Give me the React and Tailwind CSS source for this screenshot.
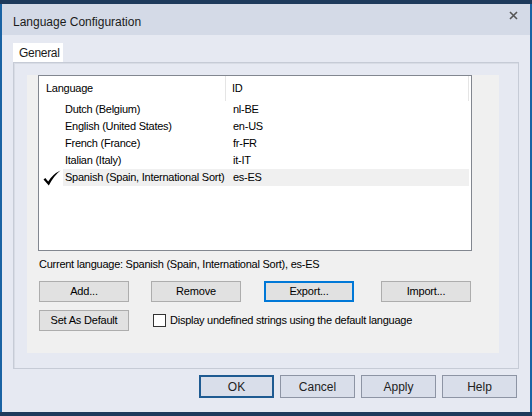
import React from 'react';

const rows = [
  { name: 'Dutch (Belgium)', id: 'nl-BE' },
  { name: 'English (United States)', id: 'en-US' },
  { name: 'French (France)', id: 'fr-FR' },
  { name: 'Italian (Italy)', id: 'it-IT' },
  { name: 'Spanish (Spain, International Sort)', id: 'es-ES', current: true },
];

function Check() {
  return (
    <svg width="18" height="16" viewBox="0 0 18 16">
      <path d="M0.5 9.5 L2.3 8 L5.2 11.6 Q9.5 4.2 17.5 0.5 Q11 5.5 5.8 15.5 Z" fill="#000" />
    </svg>
  );
}

function Btn({ children, focused, className = '' }) {
  return (
    <button
      className={
        'h-[21px] w-[90px] bg-[#e1e1e1] text-[11px] tracking-[-0.2px] text-black flex items-center justify-center ' +
        (focused ? 'border-2 border-[#0078d7] ' : 'border border-[#adadad] ') +
        className
      }
    >
      {children}
    </button>
  );
}

function DlgBtn({ children, primary }) {
  return (
    <button
      className={
        'h-[23px] w-[75px] bg-[#d9deea] text-[12px] text-[#222] flex items-center justify-center ' +
        (primary ? 'border-2 border-[#1f5b92]' : 'border border-[#8d94a4]')
      }
    >
      {children}
    </button>
  );
}

export default function App() {
  return (
    <div
      className="w-[532px] h-[416px] bg-[#1e3a5c] pt-[4px] pb-[4px] flex flex-col select-none"
      style={{ fontFamily: '"Liberation Sans", Arial, sans-serif' }}
    >
      <div className="flex-1 flex flex-col border-x-2 border-[#1a63a4]">
        {/* title bar */}
        <div className="h-[31px] bg-[#d4dae7] flex items-start justify-between pl-[11px] pr-[12px]">
          <span className="mt-[11px] leading-[14px] text-[12px] text-[#1a1a1a]">Language Configuration</span>
          <svg className="mt-[7px]" width="9" height="9" viewBox="0 0 9 9">
            <path d="M1 1 L8 8 M8 1 L1 8" stroke="#555" strokeWidth="1.6" />
          </svg>
        </div>

        {/* body */}
        <div className="flex-1 bg-[#e6e9f2] pt-[8px] px-[11px] flex flex-col">
          <div className="flex">
            <div className="h-[19px] w-[50px] bg-white flex items-center pl-[6px] text-[12px] tracking-[-0.3px] text-[#1a1a1a]">
              General
            </div>
          </div>

          <div className="h-[307px] border border-[#c6cbd6] shadow-[inset_1px_1px_0_#d8dce5] pt-[12px] pl-[13px] pr-[19px] pb-[15px]">
            <div className="h-full bg-[#f0f0f0] pl-[11px] flex flex-col text-[11px] tracking-[-0.25px] text-black">
              {/* list view */}
              <div className="w-[434px] h-[176px] bg-white border border-[#828790] flex flex-col">
                <div className="h-[25px] flex items-center">
                  <div className="w-[187px] h-full flex items-center pl-[7px] border-r border-[#e5e5e5]">Language</div>
                  <div className="w-[243px] h-full flex items-center pl-[6px] border-r border-[#e5e5e5]">ID</div>
                </div>
                {rows.map((r) => (
                  <div key={r.id} className="h-[17px] flex items-center">
                    <div className="w-[24px] h-full flex items-center justify-center pl-[2px]">
                      {r.current && <Check />}
                    </div>
                    <div className={'flex-1 h-full flex items-center mr-[2px] ' + (r.current ? 'bg-[#f0f0f0]' : '')}>
                      <div className="w-[163px] pl-[2px] whitespace-nowrap">{r.name}</div>
                      <div className="pl-[7px]">{r.id}</div>
                    </div>
                  </div>
                ))}
              </div>

              <div className="mt-[7px] h-[13px] leading-[13px] ml-[1px] whitespace-nowrap">
                Current language: Spanish (Spain, International Sort), es-ES
              </div>

              <div className="mt-[10px] flex ml-[1px]">
                <Btn>Add...</Btn>
                <Btn className="ml-[22px]">Remove</Btn>
                <Btn focused className="ml-[23px]">Export...</Btn>
                <Btn className="ml-[27px]">Import...</Btn>
              </div>

              <div className="mt-[8px] flex items-center ml-[1px]">
                <Btn>Set As Default</Btn>
                <div className="ml-[24px] w-[13px] h-[13px] bg-white border border-[#333]" />
                <span className="ml-[4px] whitespace-nowrap">Display undefined strings using the default language</span>
              </div>
            </div>
          </div>

          <div className="mt-[6px] flex justify-end gap-[6px] pr-[2px]">
            <DlgBtn primary>OK</DlgBtn>
            <DlgBtn>Cancel</DlgBtn>
            <DlgBtn>Apply</DlgBtn>
            <DlgBtn>Help</DlgBtn>
          </div>
        </div>
      </div>
    </div>
  );
}
